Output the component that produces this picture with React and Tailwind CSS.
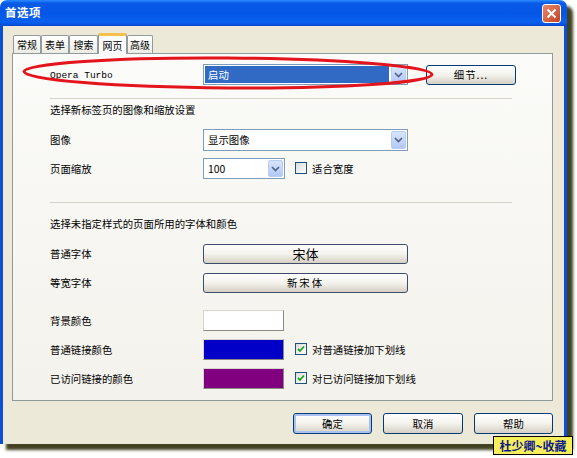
import React from 'react';

const cjk = "font-['Noto_Sans_CJK_SC','Noto_Sans',sans-serif]";

const Chevron = () => (
    <svg width="9" height="6" viewBox="0 0 9 6">
        <path d="M1 1 L4.5 4.5 L8 1" fill="none" stroke="#4d6185" strokeWidth="1.6" />
    </svg>
);

// XP style combo box
const Select = ({ value, width, selected }) => (
    <div className={`${width} h-full flex items-stretch border border-[#7f9db9] bg-white p-px`}>
        <div className={`flex-1 flex items-center pl-[3px] text-[10.4px] ${selected ? 'bg-[#316ac5] text-white' : 'text-black'}`}>
            {value}
        </div>
        <div className="w-[15px] ml-[2px] flex items-center justify-center rounded-[2px] border border-[#b9cbf7] bg-gradient-to-b from-[#d9e5fd] to-[#b3c8f7]">
            <Chevron />
        </div>
    </div>
);

const Check = ({ checked }) => (
    <div className="w-[12px] h-[12px] border border-[#1c5180] bg-gradient-to-br from-[#dcdcd7] to-white flex items-center justify-center">
        {checked && (
            <svg width="8" height="8" viewBox="0 0 8 8">
                <path d="M1 4 L3 6 L7 1.5" fill="none" stroke="#21a121" strokeWidth="1.8" />
            </svg>
        )}
    </div>
);

const XpButton = ({ children, className = '', focused }) => (
    <div className={`flex items-center justify-center rounded-[3px] border border-[#003c74] bg-gradient-to-b from-white via-[#f3f2ec] to-[#d6d0c5] text-black ${focused ? 'shadow-[inset_0_0_0_2px_#a8c1f2]' : ''} ${className}`}>
        {children}
    </div>
);

const Swatch = ({ color }) => (
    <div className={`w-[81px] h-full border border-t-[#d8d6cc] border-l-[#d8d6cc] border-r-[#8a8a80] border-b-[#8a8a80] ${color}`} />
);

const Row = ({ label, children, className = '' }) => (
    <div className={`flex items-center ${className}`}>
        <div className="w-[153px] text-[10.4px] text-black">{label}</div>
        {children}
    </div>
);

const tabs = [
    { name: '常规', w: 'w-[28px]' },
    { name: '表单', w: 'w-[28px]' },
    { name: '搜索', w: 'w-[29px]' },
    { name: '网页', w: 'w-[29px]', active: true },
    { name: '高级', w: 'w-[26px]' },
];

export default function App() {
    return (
        <div className={`relative w-[577px] h-[458px] bg-white overflow-hidden ${cjk}`}>
            <div className="w-[567px] h-[444px] flex flex-col rounded-t-[7px] overflow-hidden shadow-[6px_6px_3px_rgba(45,45,10,0.9)]">
                {/* Title bar */}
                <div className="h-[26px] flex items-center justify-between pl-[5px] pr-[6px] bg-[linear-gradient(to_bottom,#2b8cff_0%,#0a5ae8_12%,#0556e6_50%,#0a60f0_85%,#0647d0_100%)]">
                    <span className="text-[11.5px] font-bold text-white tracking-[0.5px]">首选项</span>
                    <div className="w-[19px] h-[19px] rounded-[3px] border border-white bg-gradient-to-br from-[#e9876b] to-[#c4411f] flex items-center justify-center">
                        <svg width="11" height="11" viewBox="0 0 11 11">
                            <path d="M1.5 1.5 L9.5 9.5 M9.5 1.5 L1.5 9.5" stroke="white" strokeWidth="2" />
                        </svg>
                    </div>
                </div>

                {/* Body */}
                <div className="flex-1 flex flex-col bg-[#ece9d8] border-x-[3px] border-[#0a4fd6] px-[9px] pt-[7px]">
                    {/* Tabs */}
                    <div className="h-[20px] flex items-end pl-px">
                        {tabs.map(t => (
                            <div
                                key={t.name}
                                className={`${t.w} flex items-center justify-center text-[10px] text-black border-x border-[#919b9c] ${
                                    t.active
                                        ? 'relative z-10 h-[21px] -mb-px bg-[#fcfcfe] border-t-[3px] border-t-[#f5c04a] rounded-t-[2px]'
                                        : 'h-[18px] border-t bg-gradient-to-b from-white to-[#ecebe5] rounded-t-[2px]'
                                }`}
                            >
                                {t.name}
                            </div>
                        ))}
                    </div>

                    {/* Panel */}
                    <div className="w-[541px] h-[348px] border border-[#919b9c] bg-gradient-to-b from-[#fbfbf9] to-[#f3f2ec] pl-[37px] flex flex-col">
                        <Row className="mt-[10px] h-[21px]" label={<span className="font-['Liberation_Mono',monospace] text-[9.5px]">Opera Turbo</span>}>
                            <Select value="启动" width="w-[205px]" selected />
                            <XpButton className="ml-[18px] w-[90px] h-[20px] text-[10.4px] tracking-[1px]">细节...</XpButton>
                        </Row>

                        <div className="mt-[13px] w-[462px] h-px bg-[#d6d3c8]" />
                        <div className="h-[22px] flex items-center text-[10.4px] text-black">选择新标签页的图像和缩放设置</div>

                        <Row className="mt-[8px] h-[22px]" label="图像">
                            <Select value="显示图像" width="w-[205px]" />
                        </Row>
                        <Row className="mt-[7px] h-[21px]" label="页面缩放">
                            <Select value="100" width="w-[82px]" />
                            <div className="ml-[10px] flex items-center gap-[5px] text-[10.4px]">
                                <Check />
                                <span>适合宽度</span>
                            </div>
                        </Row>

                        <div className="mt-[23px] w-[462px] h-px bg-[#d6d3c8]" />
                        <div className="mt-[10px] h-[22px] flex items-center text-[10.4px] text-black">选择未指定样式的页面所用的字体和颜色</div>

                        <Row className="mt-[9px] h-[20px]" label="普通字体">
                            <XpButton className="w-[205px] h-full text-[13px] border-[#3d4c6a]">宋体</XpButton>
                        </Row>
                        <Row className="mt-[9px] h-[20px]" label="等宽字体">
                            <XpButton className="w-[205px] h-full text-[10.4px] tracking-[2px] border-[#3d4c6a]">新宋体</XpButton>
                        </Row>

                        <Row className="mt-[17px] h-[21px]" label="背景颜色">
                            <Swatch color="bg-white" />
                        </Row>
                        <Row className="mt-[8px] h-[21px]" label="普通链接颜色">
                            <Swatch color="bg-[#0000c8]" />
                            <div className="ml-[11px] flex items-center gap-[5px] text-[10.4px]">
                                <Check checked />
                                <span>对普通链接加下划线</span>
                            </div>
                        </Row>
                        <Row className="mt-[8px] h-[21px]" label="已访问链接的颜色">
                            <Swatch color="bg-[#800080]" />
                            <div className="ml-[11px] flex items-center gap-[5px] text-[10.4px]">
                                <Check checked />
                                <span>对已访问链接加下划线</span>
                            </div>
                        </Row>
                    </div>

                    {/* Dialog buttons */}
                    <div className="mt-[12px] flex justify-end gap-[11px] pr-[2px] text-[10.4px]">
                        <XpButton focused className="w-[79px] h-[21px]">确定</XpButton>
                        <XpButton className="w-[80px] h-[21px]">取消</XpButton>
                        <XpButton className="w-[79px] h-[21px]">帮助</XpButton>
                    </div>
                </div>
            </div>

            {/* Red marker ellipse drawn over the screenshot */}
            <svg className="absolute left-0 top-0 pointer-events-none" width="577" height="458">
                <ellipse cx="228" cy="73" rx="204" ry="15" fill="none" stroke="#e3141c" strokeWidth="3" transform="rotate(0.4 228 73)" />
            </svg>

            {/* Watermark */}
            <div className="absolute left-[493px] top-[436px] w-[80px] h-[19px] border border-black bg-[#f7ef5a] flex items-center justify-center text-[12px] font-bold text-[#0b1a8c]">
                杜少卿~收藏
            </div>
        </div>
    );
}
